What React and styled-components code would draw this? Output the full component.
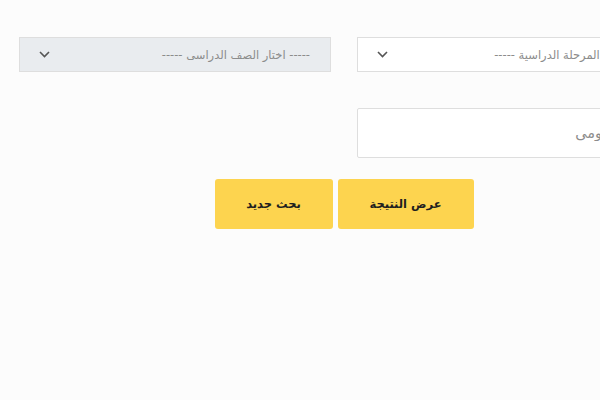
import React from 'react';
import styled, { createGlobalStyle } from 'styled-components';

const GlobalStyle = createGlobalStyle`
	html, body {
		margin: 0;
		padding: 0;
		overflow: hidden;
		background: #fcfcfc;
	}

	body {
		font-family: "DejaVu Sans", "Noto Sans", sans-serif;
	}
`

const Page = styled.div`
	width: 600px;
	height: 400px;
	overflow: hidden;
	padding-top: 37px;
	box-sizing: border-box;
`

const Form = styled.form`
	direction: rtl;
	width: 650px;
	margin-left: 19px;
	display: flex;
	flex-direction: column;
`

const Row = styled.div`
	display: grid;
	grid-template-columns: 312px 312px;
	column-gap: 26px;
	margin-bottom: ${(p) => p.$space}px;
`

const SelectBox = styled.div`
	height: 35px;
	box-sizing: border-box;
	border: 1px solid #dedede;
	background: ${(p) => (p.$disabled ? '#e9ecef' : '#ffffff')};
	display: flex;
	align-items: center;
	justify-content: space-between;
	padding: 0 20px 0 19px;
	font-size: 11.5px;
	color: #8c8c8c;
	white-space: nowrap;
`

const Chevron = styled.svg`
	width: 11px;
	height: 7px;
	flex: none;
`

const TextField = styled.input`
	direction: rtl;
	height: 50px;
	box-sizing: border-box;
	border: 1px solid #dedede;
	border-radius: 2px;
	background: #ffffff;
	padding: 0 12px;
	font-family: "DejaVu Sans", sans-serif;
	font-size: 14.5px;
	outline: none;

	&::placeholder {
		color: #8c8c8c;
	}
`

const Buttons = styled.div`
	display: flex;
	justify-content: center;
	gap: 5px;
`

const Button = styled.button`
	width: ${(p) => p.$width}px;
	height: 50px;
	border: none;
	border-radius: 3px;
	background: #fdd44f;
	color: #1f1f1f;
	font-family: "DejaVu Sans", sans-serif;
	font-weight: bold;
	font-size: 11.5px;
	cursor: pointer;
`

function Select({ label, disabled }) {
	return (
		<SelectBox $disabled={disabled}>
			<span>{label}</span>
			<Chevron viewBox='0 0 11 7'>
				<path d='M1 1l4.5 4.5L10 1' fill='none' stroke='#555' strokeWidth='1.6' />
			</Chevron>
		</SelectBox>
	);
}

export default function App() {
	return (
		<Page>
			<GlobalStyle />
			<Form>
				<Row $space={36}>
					<Select label='----- اختر المرحلة الدراسية -----' />
					<Select label='----- اختار الصف الدراسى -----' disabled />
				</Row>
				<Row $space={21}>
					<TextField type='text' placeholder='الرقم القومى' />
				</Row>
				<Buttons>
					<Button type='button' $width={136}>عرض النتيجة</Button>
					<Button type='button' $width={118}>بحث جديد</Button>
				</Buttons>
			</Form>
		</Page>
	);
}
